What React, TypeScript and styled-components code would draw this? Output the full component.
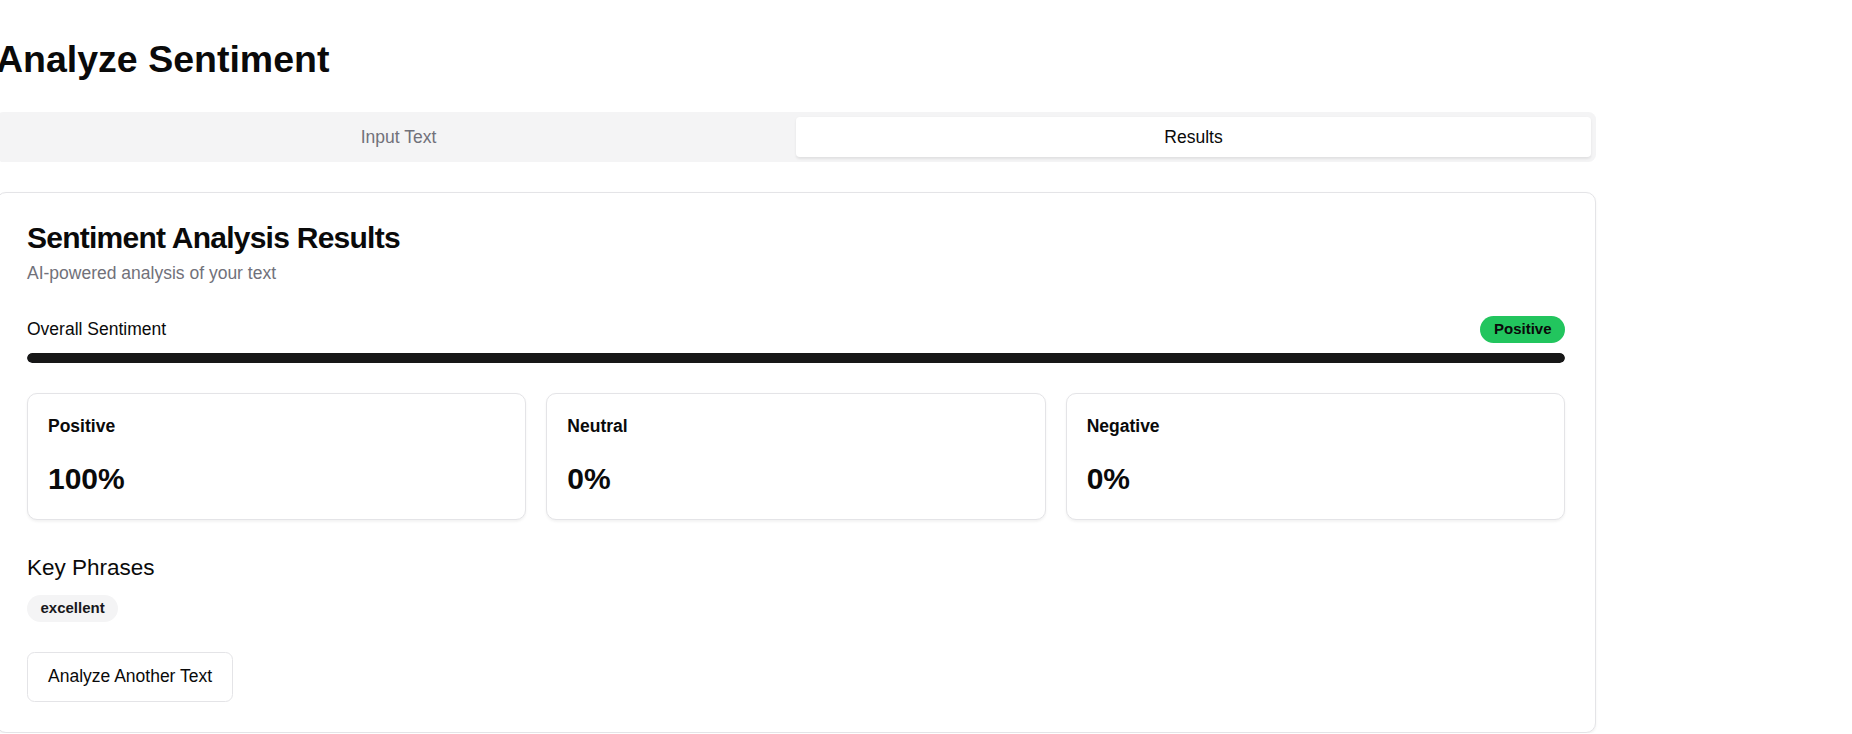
import React from "react";
import styled, { createGlobalStyle } from "styled-components";

const GlobalStyle = createGlobalStyle`
  html, body {
    margin: 0;
    padding: 0;
    background: #ffffff;
    overflow: hidden;
  }
  body {
    font-family: "Liberation Sans", Arial, Helvetica, sans-serif;
    color: #0a0a0a;
  }
  *, *::before, *::after {
    box-sizing: border-box;
  }
`;

const Page = styled.main`
  width: 1600px;
  margin-left: -4px;
  padding-top: 37px;
`;

const Heading = styled.h1`
  margin: 0 0 30px;
  font-size: 37.5px;
  line-height: 45px;
  font-weight: 700;
  color: #0a0a0a;
`;

const TabList = styled.div`
  display: grid;
  grid-template-columns: 1fr 1fr;
  height: 50px;
  padding: 5px;
  background: #f4f4f5;
  border-radius: 7.5px;
`;

const TabButton = styled.button<{ $active?: boolean }>`
  display: flex;
  align-items: center;
  justify-content: center;
  padding: 7.5px 15px;
  border: none;
  border-radius: 3.75px;
  font-family: inherit;
  font-size: 17.5px;
  line-height: 25px;
  font-weight: 500;
  cursor: pointer;
  background: ${(p) => (p.$active ? "#ffffff" : "transparent")};
  color: ${(p) => (p.$active ? "#0a0a0a" : "#71717a")};
  box-shadow: ${(p) =>
    p.$active ? "0 1.25px 2.5px rgba(0, 0, 0, 0.08)" : "none"};
`;

const Card = styled.section`
  margin-top: 30px;
  border: 1px solid #e4e4e7;
  border-radius: 10px;
  background: #ffffff;
  box-shadow: 0 1.25px 2.5px rgba(0, 0, 0, 0.05);
`;

const CardHeader = styled.header`
  display: flex;
  flex-direction: column;
  gap: 7.5px;
  padding: 30px;
`;

const CardTitle = styled.h2`
  margin: 0;
  font-size: 30px;
  line-height: 30px;
  font-weight: 700;
  letter-spacing: -0.75px;
`;

const CardDescription = styled.p`
  margin: 0;
  font-size: 17.5px;
  line-height: 25px;
  color: #71717a;
`;

const CardContent = styled.div`
  display: flex;
  flex-direction: column;
  align-items: stretch;
  padding: 0 30px 30px;
`;

const SentimentRow = styled.div`
  display: flex;
  align-items: center;
  justify-content: space-between;
  margin-bottom: 10px;
`;

const Label = styled.span`
  font-size: 17.5px;
  line-height: 25px;
`;

const Badge = styled.span<{ $bg: string; $fg: string }>`
  display: inline-flex;
  align-items: center;
  padding: 2.5px 12.5px;
  border: 1px solid transparent;
  border-radius: 9999px;
  font-size: 15px;
  line-height: 20px;
  font-weight: 700;
  background: ${(p) => p.$bg};
  color: ${(p) => p.$fg};
`;

const Track = styled.div`
  height: 10px;
  border-radius: 9999px;
  background: #f4f4f5;
  overflow: hidden;
`;

const Fill = styled.div`
  height: 100%;
  background: #171717;
  border-radius: 9999px;
`;

const StatGrid = styled.div`
  display: grid;
  grid-template-columns: repeat(3, 1fr);
  gap: 20px;
  margin-top: 30px;
`;

const StatCard = styled.div`
  display: flex;
  flex-direction: column;
  gap: 20px;
  padding: 20px;
  border: 1px solid #e4e4e7;
  border-radius: 10px;
  background: #ffffff;
  box-shadow: 0 1.25px 2.5px rgba(0, 0, 0, 0.05);
`;

const StatLabel = styled.span`
  font-size: 17.5px;
  line-height: 25px;
  font-weight: 700;
`;

const StatValue = styled.span`
  font-size: 30px;
  line-height: 40px;
  font-weight: 700;
`;

const SectionTitle = styled.h3`
  margin: 30px 0 0;
  font-size: 22.5px;
  line-height: 35px;
  font-weight: 500;
`;

const PhraseList = styled.div`
  display: flex;
  flex-wrap: wrap;
  gap: 10px;
  margin-top: 10px;
`;

const OutlineButton = styled.button`
  align-self: flex-start;
  margin-top: 30px;
  height: 50px;
  padding: 0 20px;
  border: 1px solid #e4e4e7;
  border-radius: 7.5px;
  background: #ffffff;
  font-family: inherit;
  font-size: 17.5px;
  font-weight: 500;
  color: #0a0a0a;
  cursor: pointer;
`;

const stats = [
  { label: "Positive", value: 100 },
  { label: "Neutral", value: 0 },
  { label: "Negative", value: 0 },
];

const phrases = ["excellent"];

export default function App() {
  const overall = 100;
  return (
    <>
      <GlobalStyle />
      <Page>
        <Heading>Analyze Sentiment</Heading>
        <TabList>
          <TabButton>Input Text</TabButton>
          <TabButton $active>Results</TabButton>
        </TabList>
        <Card>
          <CardHeader>
            <CardTitle>Sentiment Analysis Results</CardTitle>
            <CardDescription>AI-powered analysis of your text</CardDescription>
          </CardHeader>
          <CardContent>
            <SentimentRow>
              <Label>Overall Sentiment</Label>
              <Badge $bg="#22c55e" $fg="#0a0a0a">
                Positive
              </Badge>
            </SentimentRow>
            <Track>
              <Fill style={{ width: `${overall}%` }} />
            </Track>
            <StatGrid>
              {stats.map((s) => (
                <StatCard key={s.label}>
                  <StatLabel>{s.label}</StatLabel>
                  <StatValue>{s.value}%</StatValue>
                </StatCard>
              ))}
            </StatGrid>
            <SectionTitle>Key Phrases</SectionTitle>
            <PhraseList>
              {phrases.map((p) => (
                <Badge key={p} $bg="#f4f4f5" $fg="#18181b">
                  {p}
                </Badge>
              ))}
            </PhraseList>
            <OutlineButton>Analyze Another Text</OutlineButton>
          </CardContent>
        </Card>
      </Page>
    </>
  );
}
